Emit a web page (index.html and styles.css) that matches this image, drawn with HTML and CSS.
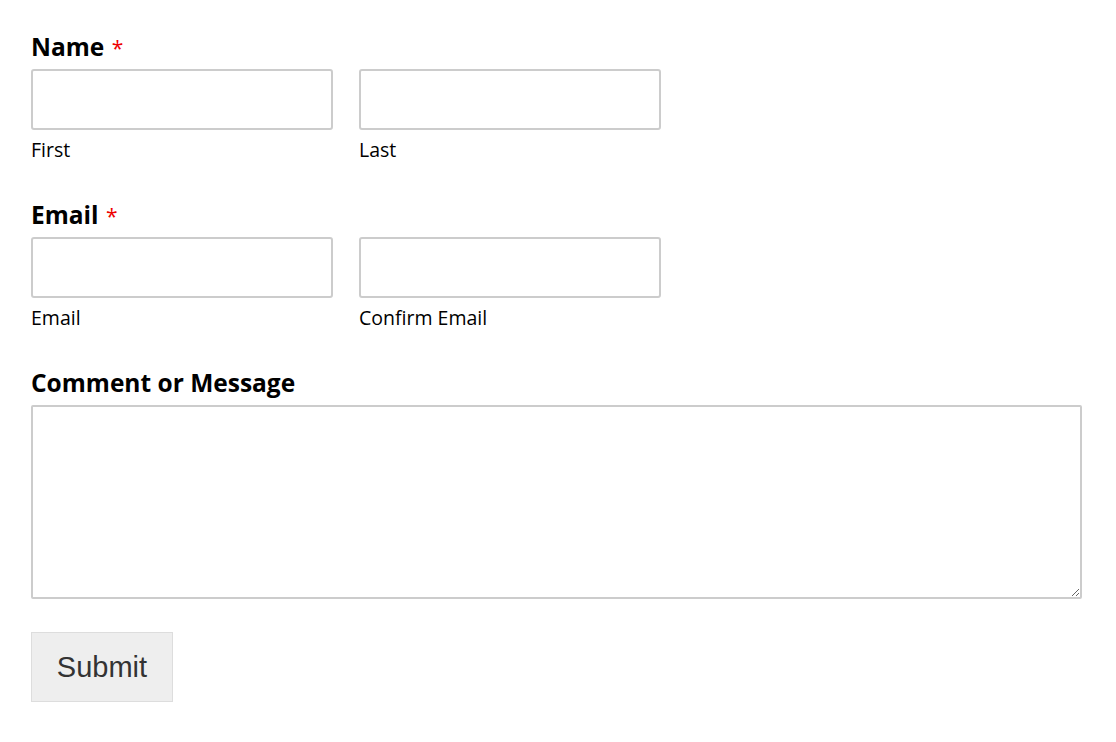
FILE: index.html
```html
<!DOCTYPE html>
<html>
    <head>
        <meta charset="UTF-8">
        <title>Contact</title>
        <link rel="stylesheet" href="styles.css">
    </head>
    <body>
        <form class="contact-form">
            <div class="field">
                <div class="field-label">Name <span class="required">*</span></div>
                <div class="field-row">
                    <div class="field-col">
                        <input type="text" class="text-input">
                        <div class="sublabel">First</div>
                    </div>
                    <div class="field-col">
                        <input type="text" class="text-input">
                        <div class="sublabel">Last</div>
                    </div>
                </div>
            </div>
            <div class="field">
                <div class="field-label">Email <span class="required">*</span></div>
                <div class="field-row">
                    <div class="field-col">
                        <input type="email" class="text-input">
                        <div class="sublabel">Email</div>
                    </div>
                    <div class="field-col">
                        <input type="email" class="text-input">
                        <div class="sublabel">Confirm Email</div>
                    </div>
                </div>
            </div>
            <div class="field field-message">
                <div class="field-label">Comment or Message</div>
                <textarea class="message"></textarea>
            </div>
            <div class="submit-wrap">
                <button type="button" class="submit">Submit</button>
            </div>
        </form>
    </body>
</html>
```

FILE: styles.css
```css
html, body {
    margin: 0;
    padding: 0;
    background: #fff;
}
.contact-form {
    padding: 30px 34px 0 31px;
    font-family: "Open Sans", "Noto Sans", sans-serif;
    color: #000;
}
.field {
    margin-bottom: 35px;
}
.field-label {
    font-size: 24.5px;
    font-weight: bold;
    line-height: 33px;
    height: 33px;
    margin-bottom: 6px;
}
.required {
    color: #e00;
    font-weight: normal;
    font-size: 21px;
    line-height: 0;
    margin-left: 1px;
}
.field-row {
    display: flex;
    gap: 26px;
}
.field-col {
    width: 302px;
}
.text-input {
    display: block;
    box-sizing: border-box;
    width: 302px;
    height: 61px;
    margin: 0;
    border: 2px solid #ccc;
    border-radius: 3px;
    background: #fff;
}
.sublabel {
    font-size: 19.5px;
    line-height: 26px;
    margin-top: 7px;
}
.message {
    display: block;
    box-sizing: border-box;
    width: 100%;
    height: 194px;
    margin: 0;
    border: 2px solid #ccc;
    border-radius: 2px;
    background: #fff;
    resize: vertical;
}
.field-message {
    margin-bottom: 33px;
}
.submit {
    box-sizing: border-box;
    width: 142px;
    height: 70px;
    border: 1px solid #ddd;
    background: #eee;
    color: #333;
    font-family: "Liberation Sans", Arial, sans-serif;
    font-size: 29px;
    padding: 0;
    margin: 0;
}
```
